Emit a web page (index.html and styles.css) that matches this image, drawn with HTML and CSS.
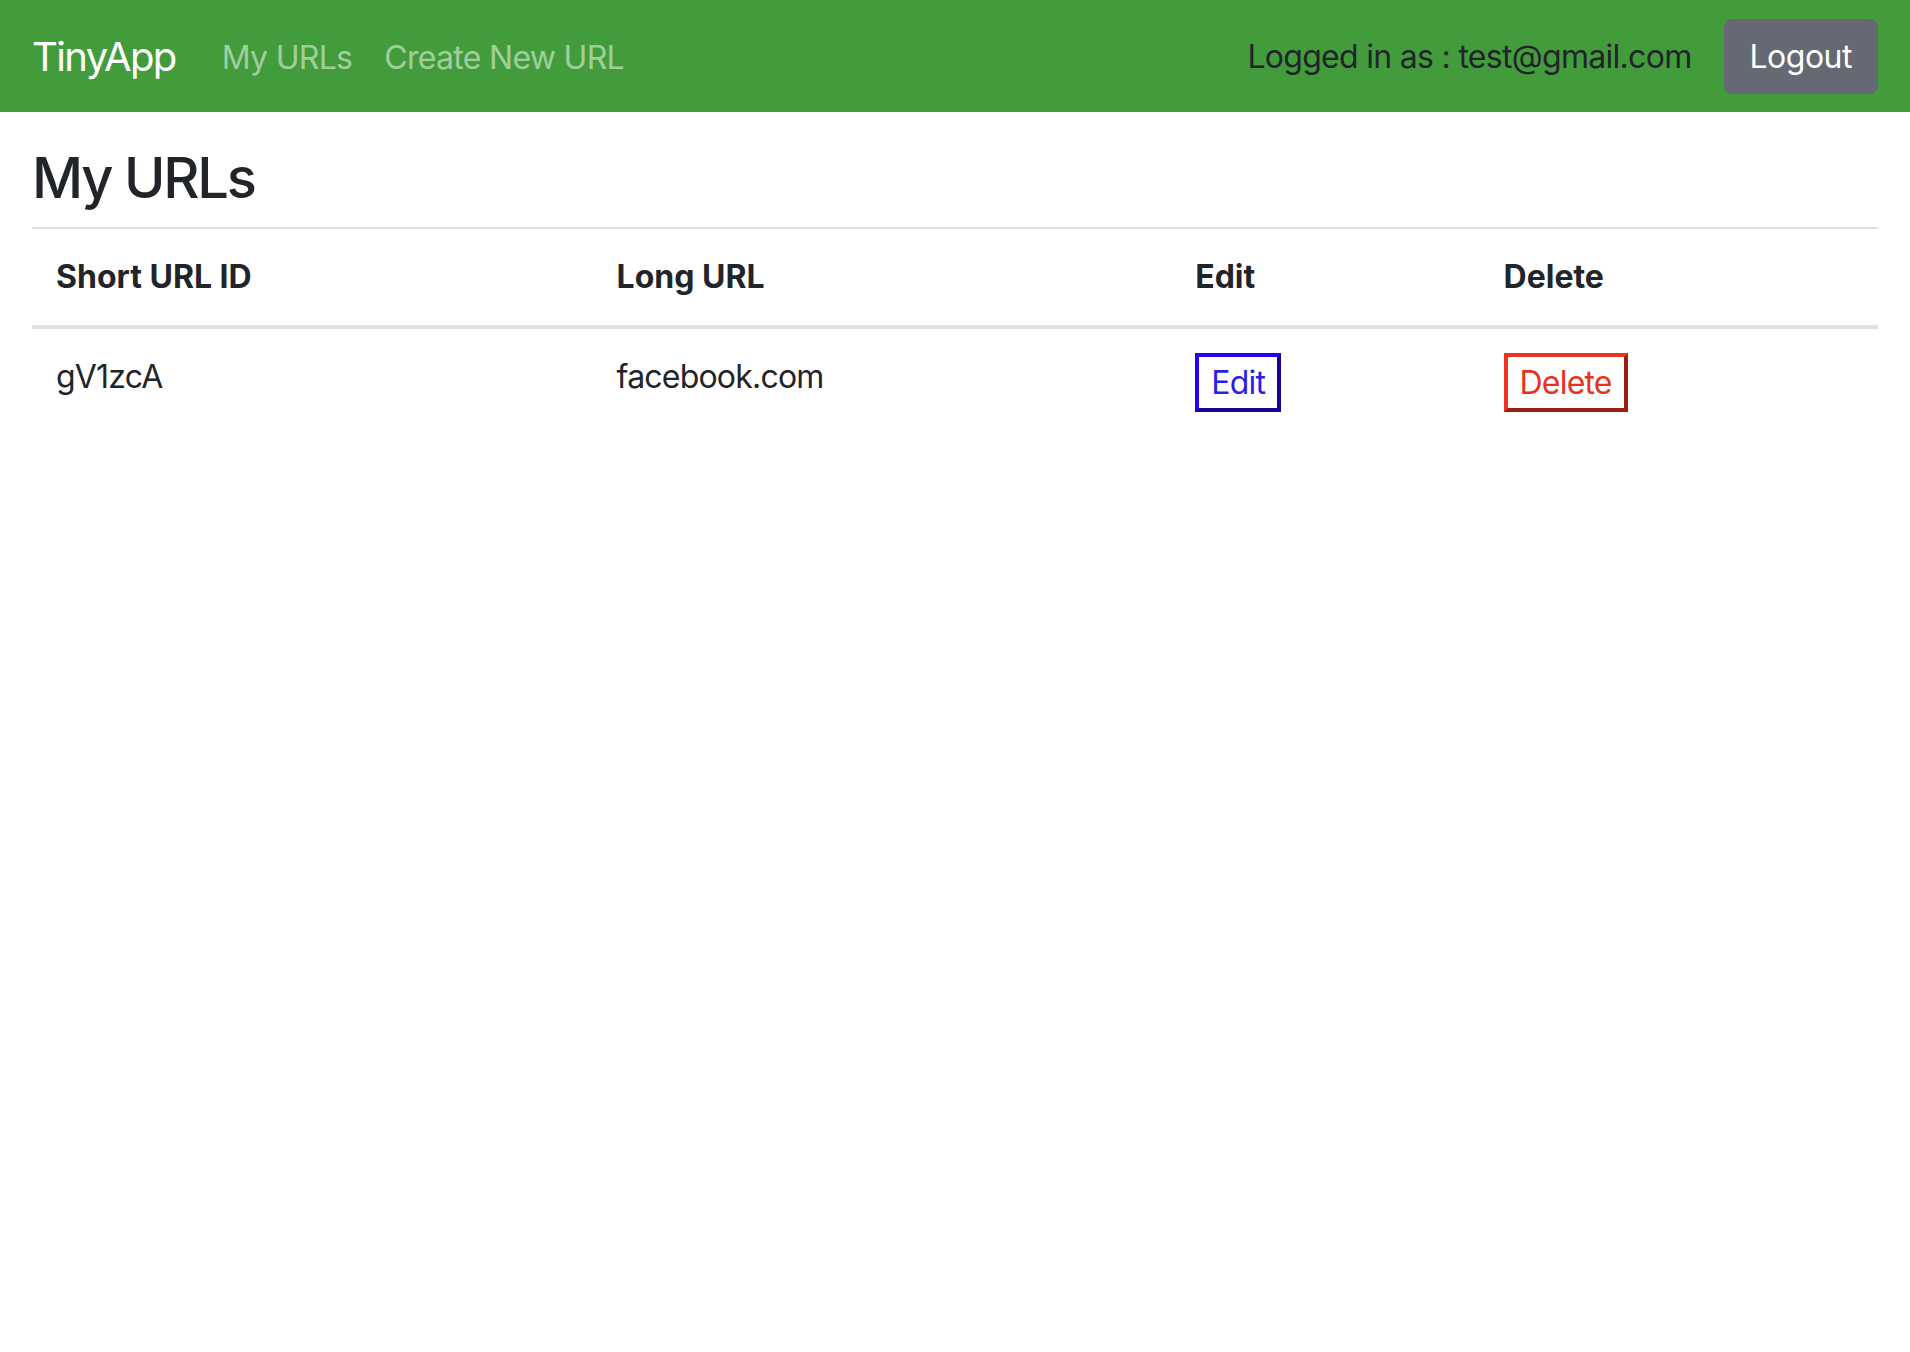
FILE: index.html
```html
<!DOCTYPE html>
<html lang="en">
<head>
<meta charset="utf-8">
<title>TinyApp</title>
<link rel="stylesheet" href="styles.css">
</head>
<body>
<nav class="navbar">
  <a class="brand" href="#">TinyApp</a>
  <div class="nav-links">
    <a class="nav-link" href="#">My URLs</a>
    <a class="nav-link" href="#">Create New URL</a>
  </div>
  <div class="nav-right">
    <span class="logged">Logged in as : test@gmail.com</span>
    <button class="btn-logout" type="button">Logout</button>
  </div>
</nav>
<main class="container">
  <h2 class="title">My URLs</h2>
  <table class="table">
    <thead>
      <tr>
        <th class="col-id">Short URL ID</th>
        <th class="col-long">Long URL</th>
        <th class="col-edit">Edit</th>
        <th class="col-del">Delete</th>
      </tr>
    </thead>
    <tbody>
      <tr>
        <td>gV1zcA</td>
        <td>facebook.com</td>
        <td><button class="btn-edit" type="button">Edit</button></td>
        <td><button class="btn-delete" type="button">Delete</button></td>
      </tr>
    </tbody>
  </table>
</main>
</body>
</html>
```
FILE: styles.css
```css
* { box-sizing: border-box; }
html, body { margin: 0; padding: 0; }
body {
  font-family: Inter, "Liberation Sans", sans-serif;
  font-size: 32px;
  line-height: 48px;
  color: #212529;
  background: #fff;
  letter-spacing: -0.8px;
}
.navbar {
  display: flex;
  align-items: center;
  background: #439c3c;
  padding: 16px 32px;
  height: 112px;
}
.brand {
  font-size: 40px;
  line-height: 60px;
  padding: 11px 0 9px;
  margin-right: 30px;
  color: #fff;
  text-decoration: none;
  letter-spacing: -1.6px;
}
.nav-links { display: flex; }
.nav-link {
  padding: 8px 16px 4px;
  color: rgba(255, 255, 255, 0.5);
  text-decoration: none;
  letter-spacing: -0.7px;
}
.nav-right {
  margin-left: auto;
  display: flex;
  align-items: center;
}
.logged {
  margin-right: 32px;
  padding-top: 2px;
  color: #212529;
  letter-spacing: -0.7px;
}
.btn-logout {
  font-family: inherit;
  font-size: 32px;
  line-height: 47px;
  padding: 12px 24px;
  border: 2px solid #646973;
  border-radius: 8px;
  background: #646973;
  color: #fff;
  letter-spacing: -0.5px;
}
.container { padding: 31px 32px 0; }
.title {
  font-size: 56px;
  line-height: 70px;
  font-weight: 500;
  margin: 0 0 14px;
  letter-spacing: -2.2px;
}
.table {
  width: 100%;
  border-collapse: collapse;
  table-layout: fixed;
}
.table th, .table td {
  padding: 24px;
  text-align: left;
  vertical-align: top;
}
.table th {
  font-weight: 700;
  letter-spacing: 0;
  border-top: 2px solid #dee2e6;
  border-bottom: 4px solid #dee2e6;
}
.col-id { width: 560px; }
.col-long { width: 578px; }
.col-edit { width: 308px; }
.col-del { width: 398px; }
.btn-edit, .btn-delete {
  font-family: inherit;
  font-size: 32px;
  line-height: 39px;
  padding: 6px 12px;
  background: #fff;
  border-width: 4px;
  border-style: solid;
  letter-spacing: -0.8px;
}
.btn-edit {
  color: #2a1fe8;
  border-color: #2200ff #1e0096 #1e0096 #2200ff;
}
.btn-delete {
  color: #e8321c;
  border-color: #ee3420 #97200f #97200f #ee3420;
}
```
